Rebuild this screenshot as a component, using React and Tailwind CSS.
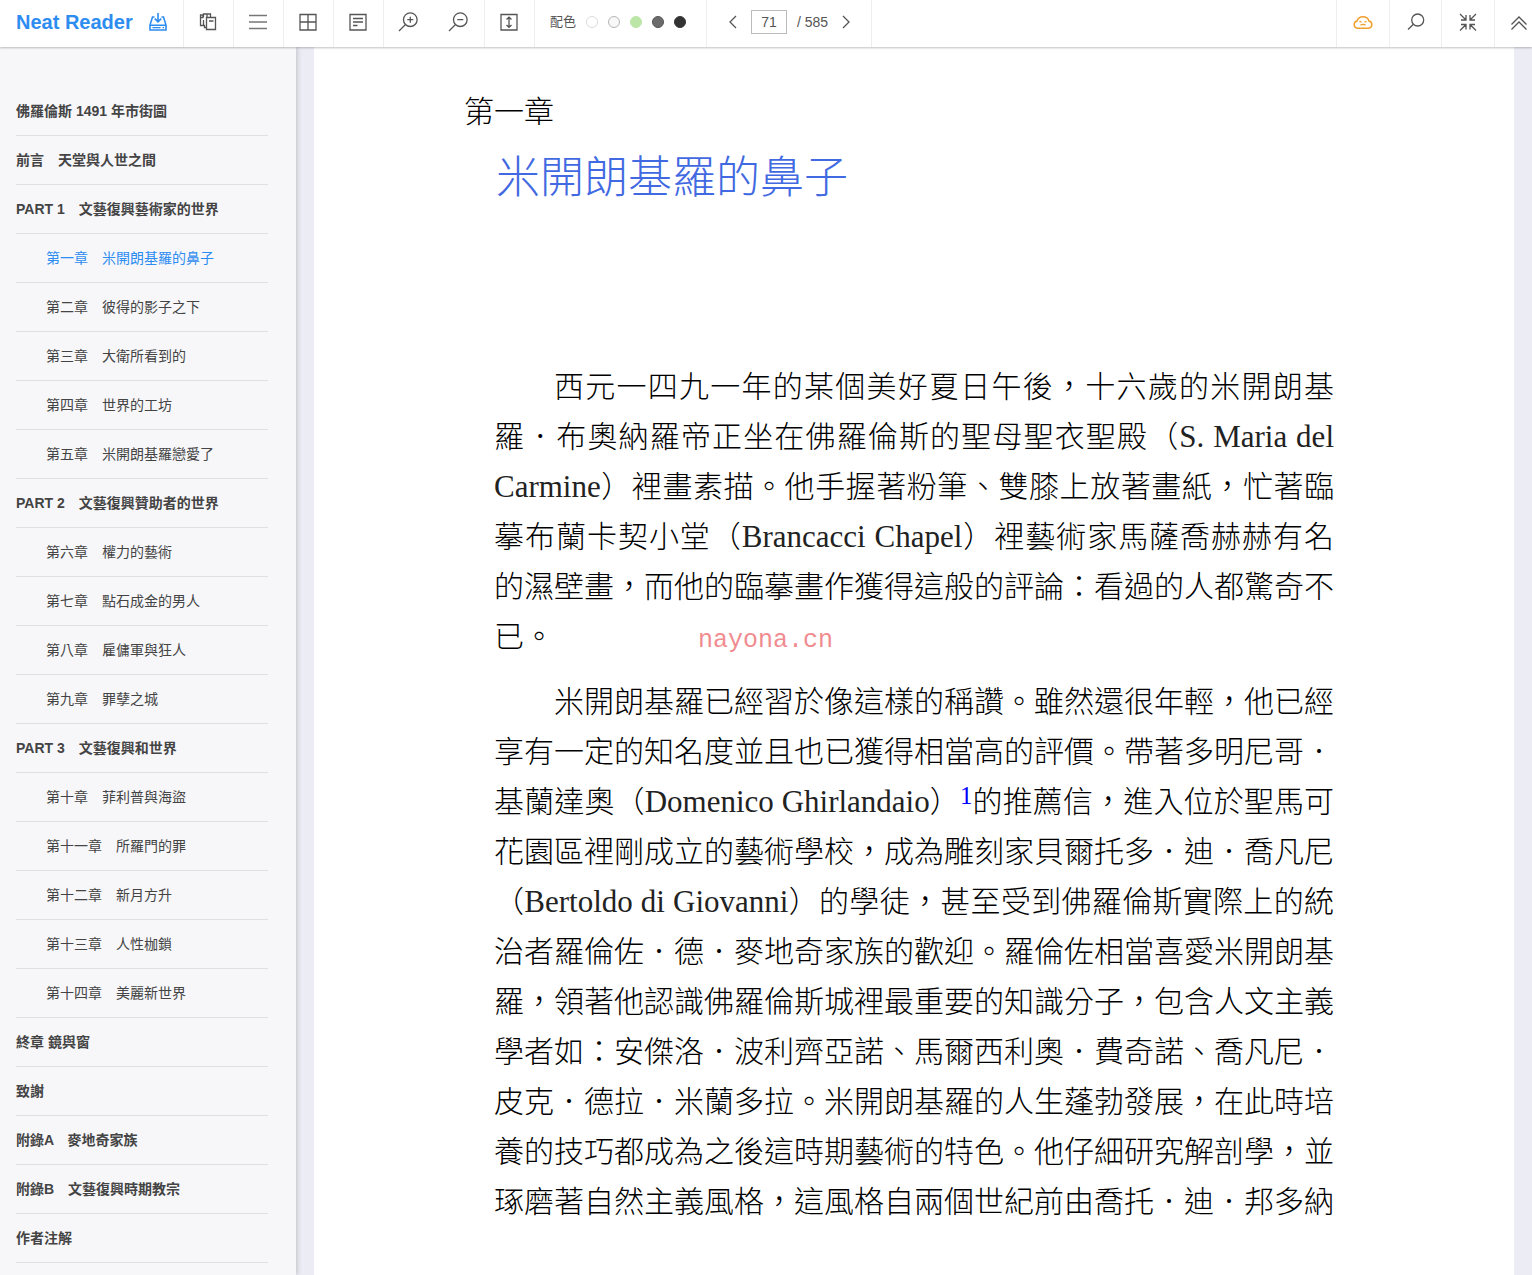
import { useState } from "react";

const contents = [
  { title: "佛羅倫斯 1491 年市街圖" },
  { title: "前言　天堂與人世之間" },
  { title: "PART 1　文藝復興藝術家的世界" },
  { title: "第一章　米開朗基羅的鼻子", sub: true },
  { title: "第二章　彼得的影子之下", sub: true },
  { title: "第三章　大衛所看到的", sub: true },
  { title: "第四章　世界的工坊", sub: true },
  { title: "第五章　米開朗基羅戀愛了", sub: true },
  { title: "PART 2　文藝復興贊助者的世界" },
  { title: "第六章　權力的藝術", sub: true },
  { title: "第七章　點石成金的男人", sub: true },
  { title: "第八章　雇傭軍與狂人", sub: true },
  { title: "第九章　罪孽之城", sub: true },
  { title: "PART 3　文藝復興和世界" },
  { title: "第十章　菲利普與海盜", sub: true },
  { title: "第十一章　所羅門的罪", sub: true },
  { title: "第十二章　新月方升", sub: true },
  { title: "第十三章　人性枷鎖", sub: true },
  { title: "第十四章　美麗新世界", sub: true },
  { title: "終章 鏡與窗" },
  { title: "致謝" },
  { title: "附錄A　麥地奇家族" },
  { title: "附錄B　文藝復興時期教宗" },
  { title: "作者注解" },
];

const themes = [
  { name: "White", style: "bg-white border-[#dcdcdc]" },
  { name: "Light gray", style: "bg-[#f8f8f8] border-[#b5b5b5]" },
  { name: "Green", style: "bg-[#bce6a8] border-[#bce6a8]" },
  { name: "Dark gray", style: "bg-[#6b6b6b] border-[#555555]" },
  { name: "Black", style: "bg-[#333333] border-[#333333]" },
];

const Icon = ({ children, className = "" }) => (
  <svg
    width="20"
    height="20"
    viewBox="0 0 20 20"
    fill="none"
    stroke="currentColor"
    strokeWidth="1.3"
    className={className}
    aria-hidden="true"
  >
    {children}
  </svg>
);

const ImportIcon = () => (
  <Icon className="text-[#2d8cf0]">
    <path d="M6.5 5H4.5L2 13v5h16v-5l-2.5-8h-2M2 13.2h16" strokeWidth="1.6" />
    <path d="M10 1v8.500M6.800 6.600 10 9.800l3.200-3.200" strokeWidth="1.6" />
    <path d="M4.500 15.700h8M14.500 15.700h1.500" />
  </Icon>
);

const CopyIcon = () => (
  <Icon>
    <path d="M8.500 15.500H6.500V13.500H2.500V3H5M5.500 5V2h7v3.500M9 2v3.500M5 3v2.500H2.500" />
    <path d="M8.500 5.500h9v12h-9zM11 9h4.500M5.500 13.500V8" />
  </Icon>
);

const MenuIcon = () => (
  <Icon className="text-[#777777]">
    <path d="M1 3.500h18M1 10h18M1 16.500h18" strokeWidth="1.5" />
  </Icon>
);

const GridIcon = () => (
  <Icon>
    <path d="M2 2.500h16v15.500H2zM10 2.500V18M2 10h16" />
  </Icon>
);

const NoteIcon = () => (
  <Icon>
    <path d="M2 2.500h16v15.500H2zM5 6.500h10M5 10h10M5 13.500h4.500" />
  </Icon>
);

const ZoomInIcon = () => (
  <Icon>
    <circle cx="12.3" cy="7.7" r="6.8" />
    <path d="M7.500 12.500 1 19M12.300 4.700v6M9.300 7.700h6" />
  </Icon>
);

const ZoomOutIcon = () => (
  <Icon>
    <circle cx="12.3" cy="7.7" r="6.8" />
    <path d="M7.500 12.500 1 19M9.300 7.700h6" />
  </Icon>
);

const LineHeightIcon = () => (
  <Icon>
    <path d="M2 2.500h16v15.500H2zM10 6v8.500M7.500 7.500 10 5.200l2.500 2.300M7.500 13 10 15.300l2.500-2.300" />
  </Icon>
);

const CloudIcon = () => (
  <Icon className="text-[#f0a030]">
    <path
      d="M4.500 16.300a3.700 3.700 0 0 1-.4-7.300C4.800 6 7 4.700 10 4.700s5.200 1.300 5.900 4.300a3.700 3.700 0 0 1-.4 7.300z"
      strokeWidth="1.5"
    />
    <path d="M6.500 9.300l2 .8M13.500 9.300l-2 .8M7.500 13.300c1.200-1.300 3.800-1.300 5 0" />
  </Icon>
);

const SearchIcon = () => (
  <Icon>
    <circle cx="11.7" cy="8" r="6" />
    <path d="M7.400 12.200 2 17.500" />
  </Icon>
);

const ShrinkIcon = () => (
  <Icon>
    <path d="M2 2l6 6M8 3v5H3M18 2l-6 6M12 3v5h5M2 18.500l6-6M8 17.500v-5H3M18 18.500l-6-6M12 17.500v-5h5" />
  </Icon>
);

const CollapseIcon = () => (
  <Icon>
    <path d="M2.500 12.500 10 5l7.500 7.500M2.500 17.500 10 10l7.500 7.500" />
  </Icon>
);

const PrevIcon = () => (
  <Icon>
    <path d="M13 4 7 10l6 6" />
  </Icon>
);

const NextIcon = () => (
  <Icon>
    <path d="M7 4l6 6-6 6" />
  </Icon>
);

const ToolButton = ({ label, children, className = "w-[50px] pr-0.5" }) => (
  <button
    type="button"
    aria-label={label}
    className={`flex shrink-0 items-center justify-center pb-1 cursor-pointer ${className}`}
  >
    {children}
  </button>
);

const Toolbar = () => {
  const [page, setPage] = useState("71");

  return (
    <header className="relative z-10 flex h-[47px] shrink-0 overflow-hidden bg-white text-[#555555] shadow-[0_1px_2px_rgba(0,0,0,0.25)]">
      <div className="flex w-[184px] shrink-0 items-center gap-[15px] border-r border-[#eeeeee] pb-1 pl-4">
        <h1 className="text-xl font-bold whitespace-nowrap text-[#2d8cf0]">Neat Reader</h1>
        <button type="button" aria-label="Import" className="cursor-pointer">
          <ImportIcon />
        </button>
      </div>
      <div className="flex divide-x divide-[#eeeeee] border-r border-[#eeeeee]">
        <ToolButton label="Copy"><CopyIcon /></ToolButton>
        <ToolButton label="Contents"><MenuIcon /></ToolButton>
        <ToolButton label="Grid"><GridIcon /></ToolButton>
        <ToolButton label="Notes"><NoteIcon /></ToolButton>
        <div className="flex">
          <ToolButton label="Zoom in"><ZoomInIcon /></ToolButton>
          <ToolButton label="Zoom out"><ZoomOutIcon /></ToolButton>
        </div>
        <ToolButton label="Line height"><LineHeightIcon /></ToolButton>
        <div className="flex w-[172px] items-center gap-[10px] pb-1 pl-[15px]">
          <span className="text-[13px] whitespace-nowrap">配色</span>
          {themes.map((theme) => (
            <button
              key={theme.name}
              type="button"
              aria-label={theme.name}
              className={`size-3 shrink-0 rounded-full border cursor-pointer ${theme.style}`}
            />
          ))}
        </div>
        <div className="flex w-[164px] items-center pb-1 pl-4 text-sm">
          <button type="button" aria-label="Previous page" className="cursor-pointer">
            <PrevIcon />
          </button>
          <input
            aria-label="Page"
            value={page}
            onChange={(e) => setPage(e.target.value)}
            className="mr-[10px] ml-2 h-6 w-9 border border-[#bbbbbb] text-center"
          />
          <span className="whitespace-nowrap">/ 585</span>
          <button type="button" aria-label="Next page" className="ml-2 cursor-pointer">
            <NextIcon />
          </button>
        </div>
      </div>
      <div className="-mr-[11px] ml-auto flex divide-x divide-[#eeeeee] border-l border-[#eeeeee]">
        <ToolButton label="Sync" className="w-[53px]"><CloudIcon /></ToolButton>
        <ToolButton label="Search" className="w-[52px]"><SearchIcon /></ToolButton>
        <ToolButton label="Exit full screen" className="w-[53px]"><ShrinkIcon /></ToolButton>
        <ToolButton label="Collapse" className="w-[48px]"><CollapseIcon /></ToolButton>
      </div>
    </header>
  );
};

const Sidebar = () => {
  const [active, setActive] = useState(3);

  return (
    <nav className="w-[296px] shrink-0 overflow-hidden bg-[#f7f7fa] pt-10 pr-7 pl-4 shadow-[1px_0_5px_rgba(0,0,0,0.2)]">
      <ul>
        {contents.map((item, idx) => (
          <li key={item.title} className="border-b border-[#e0e0e4]">
            <a
              href={`#toc-${idx}`}
              onClick={() => setActive(idx)}
              className={`block h-12 text-sm leading-[48px] whitespace-nowrap ${
                item.sub ? "pl-[30px]" : "font-bold"
              } ${idx === active ? "text-[#2d8cf0]" : "text-[#444444]"}`}
            >
              {item.title}
            </a>
          </li>
        ))}
      </ul>
    </nav>
  );
};

// western names are set a little larger and lighter than the chinese text
const Latin = ({ children }) => (
  <span className="text-[31px] leading-none text-[#222222]">{children}</span>
);

const BookPage = () => (
  <main className="mr-[18px] ml-[18px] min-w-0 flex-1 overflow-hidden bg-white px-[150px] pt-10 font-['Liberation_Serif','Noto_Sans_CJK_TC',serif] font-light text-black">
    <p className="text-[30px] leading-[50px]">第一章</p>
    <h2 className="mt-[10px] pl-8 text-[44px] leading-[64px] font-light text-[#4169e1]">
      米開朗基羅的鼻子
    </h2>
    <div className="mt-[151px] px-[30px] text-justify text-[30px] leading-[50px] [text-spacing-trim:space-all]">
      <p className="indent-[60px]">
        西元一四九一年的某個美好夏日午後，十六歲的米開朗基羅．布奧納羅帝正坐在佛羅倫斯的聖母聖衣聖殿（<Latin>S. Maria del Carmine</Latin>）裡畫素描。他手握著粉筆、雙膝上放著畫紙，忙著臨摹布蘭卡契小堂（<Latin>Brancacci Chapel</Latin>）裡藝術家馬薩喬赫赫有名的濕壁畫，而他的臨摹畫作獲得這般的評論：看過的人都驚奇不已。
        <span className="ml-36 font-['Liberation_Mono',monospace] text-[25px] leading-none text-[#f08c90]">
          nayona.cn
        </span>
      </p>
      <p className="mt-[15px] indent-[60px]">
        米開朗基羅已經習於像這樣的稱讚。雖然還很年輕，他已經享有一定的知名度並且也已獲得相當高的評價。帶著多明尼哥．基蘭達奧（<Latin>Domenico Ghirlandaio</Latin>）
        <a href="#note-1" className="align-[8px] text-[25px] leading-none text-[#0000ff]">1</a>
        的推薦信，進入位於聖馬可花園區裡剛成立的藝術學校，成為雕刻家貝爾托多．迪．喬凡尼（<Latin>Bertoldo di Giovanni</Latin>）的學徒，甚至受到佛羅倫斯實際上的統治者羅倫佐．德．麥地奇家族的歡迎。羅倫佐相當喜愛米開朗基羅，領著他認識佛羅倫斯城裡最重要的知識分子，包含人文主義學者如：安傑洛．波利齊亞諾、馬爾西利奧．費奇諾、喬凡尼．皮克．德拉．米蘭多拉。米開朗基羅的人生蓬勃發展，在此時培養的技巧都成為之後這時期藝術的特色。他仔細研究解剖學，並琢磨著自然主義風格，這風格自兩個世紀前由喬托．迪．邦多納
      </p>
    </div>
  </main>
);

const App = () => {
  return (
    <div
      lang="zh-Hant"
      className="flex h-screen flex-col overflow-hidden bg-[#ececf4] font-['Liberation_Sans','Noto_Sans_CJK_TC',sans-serif]"
    >
      <Toolbar />
      <div className="flex min-h-0 flex-1">
        <Sidebar />
        <BookPage />
      </div>
    </div>
  );
};

export default App;
